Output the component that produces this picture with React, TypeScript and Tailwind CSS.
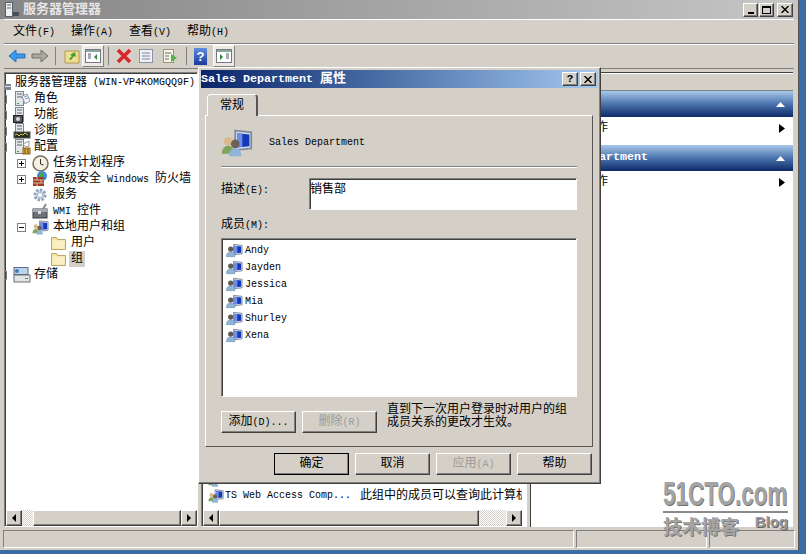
import type { ReactNode } from "react";

const raised = "border border-t-white border-l-white border-r-[#404040] border-b-[#404040] shadow-[inset_-1px_-1px_0_#808080]";
const sunken = "border border-t-[#808080] border-l-[#808080] border-r-white border-b-white shadow-[inset_1px_1px_0_#404040]";
const font = "font-['Liberation_Mono','Noto_Sans_CJK_SC',monospace]";

// latin runs are narrower than the CJK ones, like SimSun at 12px
const Txt = ({ s }: { s: string }) => (
  <>
    {s.split(/([\x20-\x7e]+)/).map((part, i) =>
      /^[\x20-\x7e]+$/.test(part) ? (
        <span key={i} className="text-[10px] whitespace-pre">{part}</span>
      ) : (
        <span key={i}>{part}</span>
      )
    )}
  </>
);

const Folder = () => (
  <svg width="15" height="14" viewBox="0 0 15 14">
    <path d="M0.500 1.500h5l1 2h8v10h-14z" fill="#f5e3a4" stroke="#b9a868" />
    <path d="M1.500 4.500h12v8h-12z" fill="#fbf0c4" />
  </svg>
);

const Server = ({ children }: { children: ReactNode }) => (
  <svg width="18" height="16" viewBox="0 0 18 16">
    <rect x="2.500" y="0.500" width="8" height="14" fill="#e4e6ea" stroke="#7c8590" />
    <path d="M4 3h5M4 6h5" stroke="#5b6672" />
    <rect x="4" y="12" width="2" height="1" fill="#3fa03f" />
    {children}
  </svg>
);

const RolesIcon = () => (
  <Server>
    <path d="M9 5l5-2 3 7-5 3z" fill="#f3f6fa" stroke="#8b95a3" />
    <path d="M11 6l3-1M12 8l3-1" stroke="#7f9fc0" />
  </Server>
);

const FeaturesIcon = () => (
  <Server>
    <rect x="0.500" y="8.500" width="9" height="7" fill="#55595e" stroke="#222" />
    <circle cx="5" cy="12" r="2" fill="#ddd" />
  </Server>
);

const DiagIcon = () => (
  <Server>
    <rect x="1" y="9" width="16" height="6" fill="#262e1c" stroke="#555" />
    <path d="M2 12l2-1 2 2 2-2 2 1 2-2 3 2" stroke="#d8c850" fill="none" />
  </Server>
);

const ConfigIcon = () => (
  <Server>
    <path d="M10 5l6-3v5l-3 1z" fill="#fff" stroke="#999" />
    <rect x="10" y="9" width="7" height="6" fill="#d8a640" stroke="#8c6a1c" />
    <path d="M12 9v6M15 9v6" stroke="#7a5a10" />
  </Server>
);

const Clock = () => (
  <svg width="17" height="17" viewBox="0 0 17 17">
    <circle cx="8.500" cy="8.500" r="7.500" fill="#f4f1e4" stroke="#77705c" strokeWidth="1.500" />
    <path d="M8.500 4v5l3 1" stroke="#333" fill="none" />
  </svg>
);

const Firewall = () => (
  <svg width="17" height="16" viewBox="0 0 17 16">
    <circle cx="10" cy="5" r="5" fill="#3f8fd0" />
    <path d="M7 3l4-1 1 3-3 2z" fill="#4da53f" />
    <rect x="1" y="6" width="11" height="9" fill="#9c3a22" />
    <path d="M1 9h11M1 12h11M5 6v3M9 9v3M5 12v3" stroke="#e2b9a4" />
  </svg>
);

const Gear = () => (
  <svg width="17" height="17" viewBox="0 0 17 17">
    <circle cx="8" cy="8" r="5" fill="#dbe6f2" stroke="#8fa4bb" strokeWidth="3" strokeDasharray="2.400 1.400" />
    <circle cx="8" cy="8" r="2.500" fill="#fff" stroke="#9db0c4" />
  </svg>
);

const Toolbox = () => (
  <svg width="17" height="16" viewBox="0 0 17 16">
    <rect x="1" y="6" width="14" height="9" fill="#6d7278" stroke="#3a3d42" />
    <rect x="1" y="6" width="14" height="3" fill="#a6abb0" />
    <rect x="6" y="8" width="3" height="3" fill="#ddd" />
    <path d="M11 6l3-5" stroke="#888" strokeWidth="2" />
  </svg>
);

const Storage = () => (
  <svg width="18" height="16" viewBox="0 0 18 16">
    <rect x="1" y="0.500" width="14" height="7" fill="#bcd3e8" stroke="#55708c" />
    <circle cx="4" cy="4" r="2" fill="#3f80b8" />
    <rect x="1" y="8" width="16" height="7" fill="#e2e4e6" stroke="#6a6f75" />
    <rect x="12" y="11" width="3" height="1" fill="#3fa03f" />
  </svg>
);

const Monitor = () => (
  <>
    <path d="M8 1l9 1v9l-9 1z" fill="#d9e0ea" stroke="#7f8a9a" />
    <path d="M9 2.500l7 .7v6.600l-7 .7z" fill="#1638b8" />
    <path d="M9 2.500l3 .3v7.500l-3 .3z" fill="#6c8ee8" />
  </>
);

const UserIcon = () => (
  <svg width="17" height="16" viewBox="0 0 18 16">
    <Monitor />
    <circle cx="5" cy="6" r="2.800" fill="#5f5a52" />
    <path d="M0.500 14c0-4 2-5 4.500-5s4.500 1 4.500 5z" fill="#8eb4d8" stroke="#5f80a0" strokeWidth="0.500" />
  </svg>
);

const GroupIcon = ({ size = 16 }: { size?: number }) => (
  <svg className="shrink-0" width={size} height={size} viewBox="0 0 18 16">
    <Monitor />
    <circle cx="4" cy="7" r="2.400" fill="#d9b98c" />
    <path d="M0.500 14c0-3 1.500-4.500 3.500-4.500s3.500 1.500 3.500 4.500z" fill="#7fa45c" />
    <circle cx="8" cy="8.500" r="2.400" fill="#6b6256" />
    <path d="M4.500 15.500c0-3 1.500-4.500 3.500-4.500s3.500 1.500 3.500 4.500z" fill="#8eb4d8" />
  </svg>
);

const Expander = ({ open }: { open: boolean }) => (
  <div className="w-[9px] h-[9px] border border-[#808080] bg-white flex items-center justify-center relative">
    <div className="w-[5px] h-px bg-black" />
    {!open && <div className="absolute w-px h-[5px] bg-black" />}
  </div>
);

const ScrollBtn = ({ dir }: { dir: "l" | "r" }) => (
  <div className={`${raised} w-4 h-full bg-[#d4d0c8] flex items-center justify-center shrink-0`}>
    <svg width="6" height="8" viewBox="0 0 6 8">
      <path d={dir === "l" ? "M5 0v8L1 4z" : "M1 0v8l4-4z"} fill="#000" />
    </svg>
  </div>
);

const Hatch = ({ w }: { w: string }) => (
  <div className={`${w} h-full bg-[repeating-conic-gradient(#d4d0c8_0_25%,#ffffff_0_50%)] bg-size-[2px_2px]`} />
);

// the tree is scrolled a little, so only the right edge of the top level boxes shows
const ClippedBox = () => <div className="w-[2px] h-[9px] shrink-0 border-y border-r border-[#808080]" />;

const topRows: { text: string; icon: ReactNode }[] = [
  { text: "角色", icon: <RolesIcon /> },
  { text: "功能", icon: <FeaturesIcon /> },
  { text: "诊断", icon: <DiagIcon /> },
  { text: "配置", icon: <ConfigIcon /> },
];

const subRows: { text: string; icon: ReactNode; open?: boolean }[] = [
  { text: "任务计划程序", icon: <Clock />, open: false },
  { text: "高级安全 Windows 防火墙", icon: <Firewall />, open: false },
  { text: "服务", icon: <Gear /> },
  { text: "WMI 控件", icon: <Toolbox /> },
  { text: "本地用户和组", icon: <GroupIcon size={17} />, open: true },
];

const DlgButton = ({ label, disabled, primary }: { label: string; disabled?: boolean; primary?: boolean }) => (
  <div
    className={`${raised} w-[75px] h-[22px] bg-[#d4d0c8] flex items-center justify-center text-xs ${
      primary ? "outline outline-black -outline-offset-1" : ""
    } ${disabled ? "text-[#9c9a94]" : "text-black"}`}
  >
    <span><Txt s={label} /></span>
  </div>
);

const members = ["Andy", "Jayden", "Jessica", "Mia", "Shurley", "Xena"];

const Dialog = () => (
  <div className={`${raised} absolute left-[198px] top-[67px] w-[403px] h-[417px] bg-[#d4d0c8] p-[2px] flex flex-col`}>
    <div className="h-[18px] shrink-0 bg-linear-to-r from-[#0a246a] to-[#a6caf0] flex items-center justify-between pr-[2px]">
      <span className="text-white font-bold text-[13px] leading-none whitespace-pre">
        <span className="text-[11.67px]">Sales Department </span>属性
      </span>
      <div className="flex gap-[2px]">
        <div className={`${raised} w-4 h-[14px] bg-[#d4d0c8] flex items-center justify-center text-[11px] font-bold text-black leading-none`}>?</div>
        <div className={`${raised} w-4 h-[14px] bg-[#d4d0c8] flex items-center justify-center`}>
          <svg width="8" height="7" viewBox="0 0 8 7"><path d="M0.500 0l7 7M7.500 0l-7 7" stroke="#000" strokeWidth="1.400" /></svg>
        </div>
      </div>
    </div>

    <div className="mt-[6px] ml-[6px] h-[22px] w-[51px] border-t border-l border-white border-r-2 border-r-[#555] rounded-t-sm flex items-center justify-center text-xs shrink-0 relative -mb-px z-10 bg-[#d4d0c8]">
      常规
    </div>

    <div className="ml-[4px] w-[388px] h-[332px] shrink-0 border border-t-white border-l-white border-r-[#555] border-b-[#555] px-[15px] pt-[10px] flex flex-col">
      <div className="flex items-center h-[34px] shrink-0">
        <GroupIcon size={32} />
        <span className="ml-[16px] text-[10px] whitespace-pre -mt-[2px]">Sales Department</span>
      </div>
      <div className="mt-[6px] w-[356px] h-[2px] shrink-0 border-t border-t-[#808080] border-b border-b-white" />
      <div className="mt-[10px] flex shrink-0">
        <div className="w-[88px] pt-[4px] text-xs leading-[16px]"><Txt s="描述(E):" /></div>
        <div className={`${sunken} w-[268px] h-[32px] bg-white text-xs leading-[14px] pt-[4px]`}>销售部</div>
      </div>
      <div className="mt-[7px] h-[16px] text-xs leading-[16px] shrink-0"><Txt s="成员(M):" /></div>
      <div className={`${sunken} mt-[5px] w-[356px] h-[159px] bg-white shrink-0 pl-[4px] pt-[3px]`}>
        {members.map((m) => (
          <div key={m} className="h-[17px] flex items-center gap-[2px]">
            <UserIcon />
            <span className="text-[10px] leading-none">{m}</span>
          </div>
        ))}
      </div>
      <div className="mt-[4px] flex shrink-0">
        <div className="mt-[10px]"><DlgButton label="添加(D)..." /></div>
        <div className="mt-[10px] ml-[6px]"><DlgButton label="删除(R)" disabled /></div>
        <div className="ml-[10px] pt-[3px] text-xs leading-[13px] w-[190px]">
          直到下一次用户登录时对用户的组<br />成员关系的更改才生效。
        </div>
      </div>
    </div>

    <div className="mt-[6px] ml-[73px] flex gap-[6px]">
      <DlgButton label="确定" primary />
      <DlgButton label="取消" />
      <DlgButton label="应用(A)" disabled />
      <DlgButton label="帮助" />
    </div>
  </div>
);

const Watermark = () => (
  <div className="absolute left-[663px] top-[476px] w-[125px] h-[64px] font-['Liberation_Sans',sans-serif] text-[#a4a4a4] pointer-events-none">
    <div className="text-[33px] leading-[36px] font-bold origin-left scale-x-[0.68] whitespace-nowrap [text-shadow:1px_1px_0_#6f6f6f]">51CTO.com</div>
    <div className="h-[2px] -mt-[1px] bg-[#8a8a8a]" />
    <div className="flex justify-between items-start mt-[2px]">
      <span className="text-[19px] leading-[22px] font-bold font-['Noto_Sans_CJK_SC',sans-serif] [text-shadow:1px_1px_0_#777]">技术博客</span>
      <span className="text-[15px] leading-[14px] font-bold text-[#999] [text-shadow:1px_1px_0_#666]">Blog</span>
    </div>
  </div>
);

const ActionBand = ({ title }: { title: string }) => (
  <>
    <div className="h-[26px] shrink-0 bg-linear-to-b from-[#a9c8ea] via-[#4b74ad] to-[#0e2a68] flex items-center justify-between pl-[5px] pr-[8px]">
      <span className="text-white font-bold text-[11.67px]">{title}</span>
      <svg width="9" height="5" viewBox="0 0 9 5"><path d="M0 5l4.500-5 4.500 5z" fill="#fff" /></svg>
    </div>
    <div className="h-[28px] shrink-0 bg-white flex items-start justify-between pt-[4px] pl-[29px] pr-[8px] text-xs">
      <span className="leading-[14px]">更多操作</span>
      <svg className="mt-[3px]" width="6" height="9" viewBox="0 0 6 9"><path d="M0 0l6 4.500-6 4.500z" fill="#000" /></svg>
    </div>
  </>
);

const Toolbar = () => (
  <div className="h-[25px] border-t border-t-white border-b border-b-[#808080] flex items-center pl-[4px] pb-[1px] shrink-0">
    <svg width="18" height="14" viewBox="0 0 18 14"><path d="M8 1L1 7l7 6V9h9V5H8z" fill="#3a9be8" stroke="#1a70c0" /></svg>
    <svg className="ml-[5px]" width="18" height="14" viewBox="0 0 18 14"><path d="M10 1l7 6-7 6V9H1V5h9z" fill="#a8a8a0" stroke="#707068" /></svg>
    <div className="ml-[6px] w-px h-[18px] bg-[#808080]" />
    <svg className="ml-[8px]" width="16" height="16" viewBox="0 0 16 16">
      <path d="M1 3h14v12H1z" fill="#f2dc90" stroke="#b09a50" />
      <path d="M5 11l3-3-2-1 5-3 1 5-2-1-3 4z" fill="#3f9f30" />
    </svg>
    <div className="ml-[2px] w-[22px] h-[22px] bg-[#ece9e2] border border-t-white border-l-white border-r-[#808080] border-b-[#808080] flex items-center justify-center">
      <svg width="16" height="16" viewBox="0 0 16 16">
        <rect x="0.500" y="1.500" width="15" height="13" fill="#fff" stroke="#778" />
        <rect x="1" y="2" width="14" height="2" fill="#8a9" />
        <path d="M3 6h3M3 8h3M3 10h3" stroke="#557" />
        <path d="M12 6v6l-3-3z" fill="#2a8a3a" />
      </svg>
    </div>
    <div className="ml-[4px] w-px h-[18px] bg-[#808080]" />
    <svg className="ml-[7px]" width="16" height="16" viewBox="0 0 16 16"><path d="M2 2l12 12M14 2L2 14" stroke="#d8262a" strokeWidth="3.500" /></svg>
    <svg className="ml-[6px]" width="16" height="16" viewBox="0 0 16 16">
      <rect x="1.500" y="1.500" width="13" height="13" fill="#eef1f6" stroke="#8a93a2" />
      <path d="M4 5h8M4 8h8M4 11h8" stroke="#7b8798" />
    </svg>
    <svg className="ml-[8px]" width="16" height="16" viewBox="0 0 16 16">
      <rect x="1.500" y="1.500" width="10" height="13" fill="#f8f6e8" stroke="#9a957e" />
      <path d="M3 5h6M3 8h4M3 11h4" stroke="#666" />
      <path d="M9 6l6 4-6 4z" fill="#53b04a" />
    </svg>
    <div className="ml-[8px] w-px h-[18px] bg-[#808080]" />
    <div className="ml-[7px] w-[13px] h-[17px] bg-linear-to-b from-[#5f8ee0] to-[#1b3a9c] text-white text-[13px] leading-[17px] font-bold text-center font-['Liberation_Sans',sans-serif]">?</div>
    <div className="ml-[6px] w-[22px] h-[22px] bg-[#ece9e2] border border-t-white border-l-white border-r-[#808080] border-b-[#808080] flex items-center justify-center">
      <svg width="16" height="16" viewBox="0 0 16 16">
        <rect x="0.500" y="1.500" width="15" height="13" fill="#fff" stroke="#778" />
        <rect x="1" y="2" width="14" height="2" fill="#8a9" />
        <path d="M4 6v6l3-3z" fill="#2a8a3a" />
        <path d="M10 6h3M10 8h3M10 10h3" stroke="#557" />
      </svg>
    </div>
  </div>
);

export default function App() {
  return (
    <div className={`relative w-[806px] h-[554px] overflow-hidden bg-[#3a6ea5] text-black ${font}`}>
      <div className="w-[799px] h-[550px] bg-[#d4d0c8] border-r border-r-[#555] flex flex-col">
        {/* title bar */}
        <div className="h-[19px] shrink-0 bg-linear-to-r from-[#868686] to-[#c6c6c6] flex items-center pl-[4px] pr-[5px]">
          <svg width="16" height="16" viewBox="0 0 16 16">
            <rect x="1.500" y="0.500" width="7" height="14" fill="#eef0f3" stroke="#55606c" />
            <path d="M3 3h4M3 6h4" stroke="#55606c" />
            <rect x="9" y="10" width="6" height="4" fill="#4a5058" />
          </svg>
          <span className="ml-[3px] text-[13px] font-bold text-[#e6e6e6]">服务器管理器</span>
          <div className="ml-auto flex gap-px">
            <div className={`${raised} w-[15px] h-[14px] bg-[#d4d0c8] flex items-end justify-center pb-[2px]`}><div className="w-[6px] h-[2px] bg-black" /></div>
            <div className={`${raised} w-[15px] h-[14px] bg-[#d4d0c8] flex items-center justify-center`}><div className="w-[9px] h-[8px] border border-black border-t-2" /></div>
            <div className={`${raised} w-[16px] h-[14px] ml-[2px] bg-[#d4d0c8] flex items-center justify-center`}>
              <svg width="8" height="7" viewBox="0 0 8 7"><path d="M0.500 0l7 7M7.500 0l-7 7" stroke="#000" strokeWidth="1.400" /></svg>
            </div>
          </div>
        </div>

        {/* menu */}
        <div className="h-[25px] shrink-0 mx-[4px] pt-[1px] border-t border-t-white border-b border-b-[#808080] flex items-center gap-[16px] pl-[9px] text-xs">
          {["文件(F)", "操作(A)", "查看(V)", "帮助(H)"].map((m) => (
            <span key={m} className="w-[42px] whitespace-nowrap"><Txt s={m} /></span>
          ))}
        </div>
        <div className="mx-[4px]"><Toolbar /></div>

        {/* panes */}
        <div className="mt-[3px] flex h-[455px] shrink-0 pl-[4px]">
          <div className={`${sunken} w-[194px] shrink-0 bg-white flex flex-col`}>
            <div className="flex-1 pt-[1px] text-xs overflow-hidden">
              <div className="h-4 flex items-center whitespace-pre mt-[1px]">
                <svg className="shrink-0 mt-[8px] mr-[4px]" width="6" height="6" viewBox="0 0 6 6"><rect width="6" height="6" fill="#7c8590" /><rect y="2" width="6" height="1" fill="#dde" /></svg>
                <Txt s="服务器管理器 (WIN-VP4KOMGQQ9F)" />
              </div>
              {topRows.map((r) => (
                <div key={r.text} className="h-4 flex items-center">
                  <ClippedBox />
                  <div className="ml-[6px] mr-[3px] flex">{r.icon}</div>
                  <span>{r.text}</span>
                </div>
              ))}
              {subRows.map((r) => (
                <div key={r.text} className="h-4 flex items-center whitespace-pre pl-[12px]">
                  <div className="w-[15px] shrink-0">{r.open !== undefined && <Expander open={r.open} />}</div>
                  <div className="w-[21px] shrink-0 flex">{r.icon}</div>
                  <span><Txt s={r.text} /></span>
                </div>
              ))}
              <div className="h-4 flex items-center pl-[46px]"><Folder /><span className="ml-[5px]">用户</span></div>
              <div className="h-4 flex items-center pl-[46px]"><Folder /><span className="ml-[3px] px-[2px] bg-[#d4d0c8]">组</span></div>
              <div className="h-4 flex items-center">
                <ClippedBox />
                <div className="ml-[6px] mr-[3px] flex"><Storage /></div>
                <span>存储</span>
              </div>
            </div>
            <div className="h-4 flex shrink-0 ml-[1px] bg-[#d4d0c8]">
              <ScrollBtn dir="l" />
              <Hatch w="w-[11px]" />
              <div className={`${raised} flex-1 bg-[#d4d0c8]`} />
              <ScrollBtn dir="r" />
            </div>
          </div>

          <div className={`${sunken} ml-[3px] w-[326px] shrink-0 bg-white flex flex-col justify-end`}>
            {[0, 1].map((i) => (
              <div key={i} className="h-4 mr-[4px] flex items-center text-xs whitespace-pre pl-[6px] overflow-hidden">
                <GroupIcon />
                <span className="ml-[1px] w-[135px] shrink-0 text-[10px]">TS Web Access Comp...</span>
                <span>此组中的成员可以查询此计算机</span>
              </div>
            ))}
            <div className="h-[6px]" />
            <div className="h-4 flex ml-[1px] mr-[4px] bg-[#d4d0c8]">
              <ScrollBtn dir="l" />
              <div className={`${raised} w-[260px] bg-[#d4d0c8]`} />
              <Hatch w="flex-1" />
              <ScrollBtn dir="r" />
            </div>
          </div>

          <div className="ml-[3px] w-[263px] shrink-0 flex flex-col border-t border-t-[#404040] border-l border-l-[#404040]">
            <div className="h-[18px] shrink-0 border-t border-t-white border-b border-b-[#808080] bg-[#d4d0c8] text-xs pl-[5px] leading-[14px]">操作</div>
            <ActionBand title="组" />
            <ActionBand title="Sales Department" />
            <div className="flex-1 bg-white" />
          </div>
        </div>

        {/* status bar */}
        <div className="mt-[3px] mx-[3px] h-[18px] flex text-xs">
          <div className="w-[571px] border border-t-[#808080] border-l-[#808080] border-r-white border-b-white" />
          <div className="ml-[2px] w-[131px] border border-t-[#808080] border-l-[#808080] border-r-white border-b-white" />
          <div className="ml-[2px] flex-1 border border-t-[#808080] border-l-[#808080] border-r-white border-b-white" />
        </div>
      </div>

      <Dialog />
      <Watermark />
    </div>
  );
}
